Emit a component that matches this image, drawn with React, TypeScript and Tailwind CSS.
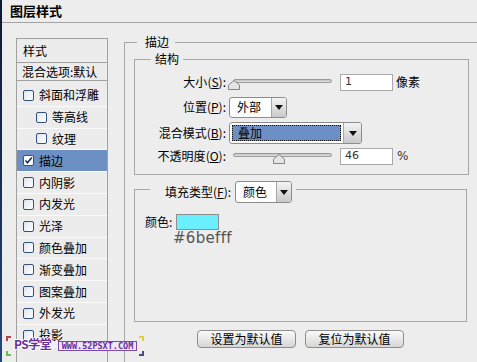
import { type ReactNode } from 'react';

const cjk = "font-['Noto_Sans_CJK_SC','Noto_Sans',sans-serif]";

const items: { label: string; sub?: boolean; checked?: boolean }[] = [
  { label: '斜面和浮雕' },
  { label: '等高线', sub: true },
  { label: '纹理', sub: true },
  { label: '描边', checked: true },
  { label: '内阴影' },
  { label: '内发光' },
  { label: '光泽' },
  { label: '颜色叠加' },
  { label: '渐变叠加' },
  { label: '图案叠加' },
  { label: '外发光' },
  { label: '投影' },
];

function CheckBox({ checked }: { checked?: boolean }) {
  return (
    <span
      className={`flex h-[11px] w-[11px] shrink-0 items-center justify-center rounded-[2px] border border-[#34507c] ${
        checked ? 'bg-white' : 'bg-gradient-to-br from-[#dfe6f1] to-[#ffffff]'
      }`}
    >
      {checked && (
        <svg width="9" height="9" viewBox="0 0 9 9">
          <path d="M1.5 4.5 L3.5 6.8 L7.8 1.5" fill="none" stroke="#1d2f4e" strokeWidth="1.6" />
        </svg>
      )}
    </span>
  );
}

function Label({ text, hot, width = 'w-[91px]' }: { text: string; hot: string; width?: string }) {
  return (
    <span className={`${width} shrink-0 text-right text-[12px] leading-none text-black`}>
      {text}(<u>{hot}</u>):
    </span>
  );
}

function Slider({ at }: { at: number }) {
  return (
    <div className="relative h-[20px] w-[104px] shrink-0">
      <div className="absolute left-[4px] right-[1px] top-[7px] h-[4px] rounded-full border border-[#9a9a9a] bg-gradient-to-b from-[#bdbdbd] to-[#e8e8e8]" />
      <svg
        className="absolute top-[8px]"
        style={{ left: at }}
        width="12"
        height="10"
        viewBox="0 0 12 10"
      >
        <path d="M6 0.5 L11.5 5 L11.5 9.5 L0.5 9.5 L0.5 5 Z" fill="#e4e4e4" stroke="#858585" />
      </svg>
    </div>
  );
}

function NumBox({ value }: { value: string }) {
  return (
    <div className="flex h-[17px] w-[53px] shrink-0 items-center border border-[#a9a9a9] bg-white pl-[4px] font-['DejaVu_Sans',sans-serif] text-[11px] text-[#333]">
      {value}
    </div>
  );
}

function Arrow() {
  return (
    <svg width="8" height="5" viewBox="0 0 8 5">
      <path d="M0 0 L8 0 L4 5 Z" fill="#111" />
    </svg>
  );
}

function Dropdown({
  value,
  width,
  height,
  active,
  btn = 'w-[15px]',
}: {
  value: string;
  width: string;
  height: string;
  active?: boolean;
  btn?: string;
}) {
  return (
    <div className={`flex ${width} ${height} shrink-0 rounded-[3px] border border-[#8c8c8c] bg-white`}>
      <div className="flex flex-1 items-center p-[2px]">
        <div
          className={`flex h-full w-full items-center pl-[5px] text-[12px] ${
            active ? 'border border-dotted border-[#111] bg-[#6c90c6] pl-[4px]' : ''
          }`}
        >
          {value}
        </div>
      </div>
      <div
        className={`flex ${btn} items-center justify-center rounded-r-[2px] border-l border-[#a8a8a8] bg-gradient-to-b from-[#f4f4f4] to-[#c9c9c9]`}
      >
        <Arrow />
      </div>
    </div>
  );
}

function Btn({ children }: { children: ReactNode }) {
  return (
    <button className="flex h-[18px] w-[99px] items-center justify-center rounded-[4px] border border-[#8e8e8e] bg-gradient-to-b from-[#fafafa] to-[#d6d6d6] text-[12px] leading-none text-black">
      {children}
    </button>
  );
}

export default function App() {
  return (
    <div className={`relative flex h-[362px] w-[477px] overflow-hidden bg-[#ededed] ${cjk} text-black`}>
      <div className="w-[2px] shrink-0 bg-gradient-to-b from-[#0c1a33] to-[#23467a]" />

      <div className="flex flex-1 flex-col">
        <div className="flex h-[23px] shrink-0 items-center border-b border-[#a4a4a4] pl-[8px] text-[13px] font-bold">
          图层样式
        </div>

        <div className="flex pl-[14px] pt-[12px]">
          {/* style list */}
          <div className="mt-[3px] h-[340px] w-[92px] shrink-0 border border-[#a0a0a0] bg-[#ececec]">
            <div className="flex h-[24px] items-center border-b border-[#a0a0a0] pl-[6px] text-[12px]">
              样式
            </div>
            <div className="flex h-[18px] items-center border-b border-[#a0a0a0] pl-[5px] text-[12px] leading-none">
              混合选项:默认
            </div>
            <div className="mt-[4px]">
              {items.map((it) => (
                <div
                  key={it.label}
                  className={`flex h-[21.8px] items-center gap-[5px] border-b border-[#fbfbfb] text-[12px] leading-none ${
                    it.sub ? 'pl-[19px]' : 'pl-[6px]'
                  } ${it.checked ? 'bg-[#6d90c4]' : ''}`}
                >
                  <CheckBox checked={it.checked} />
                  {it.label}
                </div>
              ))}
            </div>
          </div>

          {/* stroke group */}
          <fieldset className="ml-[16px] h-[340px] w-[360px] shrink-0 border border-[#a6a6a6] p-0">
            <legend className="ml-[12px] pl-[8px] pr-[6px] text-[12px] leading-[14px]">描边</legend>

            <fieldset className="ml-[9px] mt-[3px] w-[335px] border border-[#a6a6a6] p-0">
              <legend className="ml-[16px] px-[4px] text-[12px] leading-[14px]">结构</legend>
              <div className="flex flex-col pb-[9px] pt-[6px]">
                <div className="flex h-[20px] items-center">
                  <Label text="大小" hot="S" />
                  <span className="w-[3px]" />
                  <Slider at={-1} />
                  <span className="w-[7px]" />
                  <NumBox value="1" />
                  <span className="ml-[3px] text-[12px]">像素</span>
                </div>
                <div className="mt-[5px] flex h-[20px] items-center">
                  <Label text="位置" hot="P" />
                  <span className="w-[3px]" />
                  <Dropdown value="外部" width="w-[58px]" height="h-[21px]" />
                </div>
                <div className="mt-[5px] flex h-[22px] items-center">
                  <Label text="混合模式" hot="B" />
                  <span className="w-[3px]" />
                  <Dropdown value="叠加" width="w-[133px]" height="h-[22px]" active btn="w-[18px]" />
                </div>
                <div className="mt-[3px] flex h-[18px] items-center">
                  <Label text="不透明度" hot="O" />
                  <span className="w-[3px]" />
                  <Slider at={44} />
                  <span className="w-[7px]" />
                  <NumBox value="46" />
                  <span className="ml-[4px] font-['DejaVu_Sans',sans-serif] text-[12px] text-[#333]">%</span>
                </div>
              </div>
            </fieldset>

            <fieldset className="ml-[9px] mt-[6px] w-[333px] border border-[#a6a6a6] p-0">
              <legend className="ml-[15px] pl-[15px] pr-[4px]">
                <div className="mb-[-6px] flex h-[22px] items-center gap-[4px] text-[12px]">
                  <span>
                    填充类型(<u>F</u>):
                  </span>
                  <Dropdown value="颜色" width="w-[57px]" height="h-[22px]" />
                </div>
              </legend>
              <div className="h-[124px] pt-[17px]">
                <div className="flex items-center pl-[10px]">
                  <span className="w-[31px] text-[12px] leading-[16px]">颜色:</span>
                  <span className="h-[16px] w-[43px] border border-[#8f8f8f] bg-[#6befff]" />
                </div>
                <div className="ml-[38px] font-['DejaVu_Sans',sans-serif] text-[15px] leading-[16px] tracking-[0.3px] text-[#555]">
                  #6befff
                </div>
              </div>
            </fieldset>

            <div className="mt-[8px] flex gap-[9px] pl-[72px]">
              <Btn>设置为默认值</Btn>
              <Btn>复位为默认值</Btn>
            </div>
          </fieldset>
        </div>
      </div>

      {/* watermark */}
      <div className="absolute left-[6px] top-[336px] h-[5px] w-[5px] border-l-2 border-t-2 border-[#c0404a]" />
      <div className="absolute left-[6px] top-[351px] h-[5px] w-[5px] border-b-2 border-l-2 border-[#66c24a]" />
      <div className="absolute left-[139px] top-[336px] h-[5px] w-[5px] border-r-2 border-t-2 border-[#e6cf3c]" />
      <div className="absolute left-[139px] top-[351px] h-[5px] w-[5px] border-b-2 border-r-2 border-[#4a4a8a]" />
      <div className="absolute left-[14px] top-[337px] whitespace-nowrap text-[12px] font-bold leading-[14px] tracking-[-0.5px] text-[#6a2f9a] [text-shadow:1px_0_#fff,-1px_0_#fff,0_1px_#fff,0_-1px_#fff]">
        PS学堂
      </div>
      <div className="absolute left-[58px] top-[341px] flex h-[10px] w-[79px] items-center justify-center border border-[#7a4aa8] bg-[#ede6fb] font-['DejaVu_Sans_Mono',monospace] text-[8.5px] font-bold leading-none text-[#6a2f9a]">
        WWW.52PSXT.COM
      </div>
    </div>
  );
}
